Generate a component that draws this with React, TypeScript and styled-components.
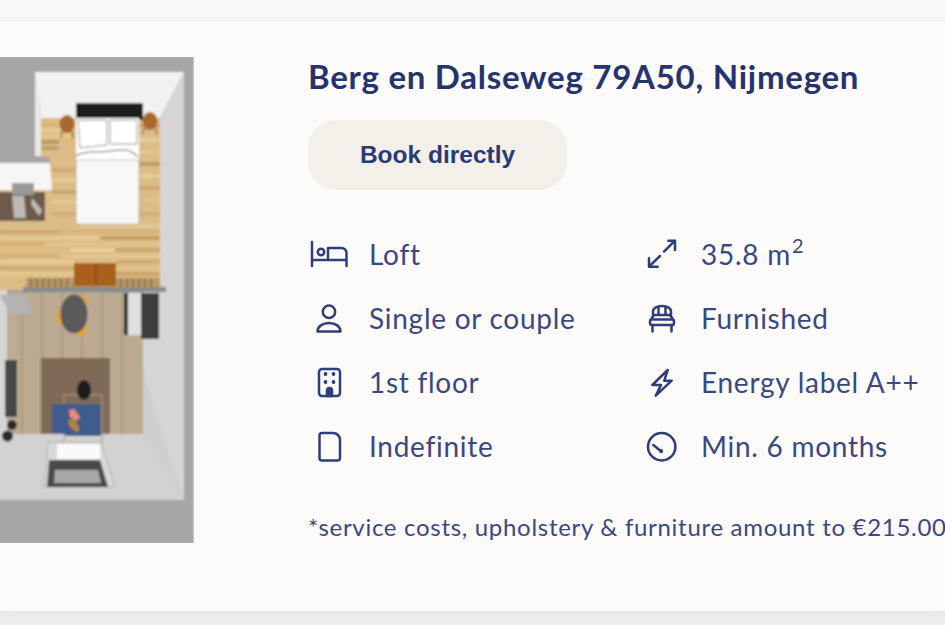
import React from "react";
import styled, { createGlobalStyle } from "styled-components";

const Global = createGlobalStyle`
  html, body { margin: 0; padding: 0; width: 945px; height: 625px; overflow: hidden; background: #fdfbf8; }
  #root { width: 945px; height: 625px; overflow: hidden; }
`;

const Page = styled.main`
  width: 945px;
  height: 625px;
  padding: 22px 0 14px;
  box-sizing: border-box;
  background: linear-gradient(#fdfbf8 0, #f5f5f5 22px, #eeeef0 100%);
  font-family: "Lato", "Liberation Sans", sans-serif;
  color: #2b3a75;
`;

const Card = styled.article`
  display: flex;
  height: 589px;
  padding-top: 35px;
  box-sizing: border-box;
  background: #fdfbf9;
  box-shadow: 0 2px 10px rgba(40, 50, 90, 0.06);
  overflow: hidden;
`;

const Plan = styled.svg`
  flex: 0 0 194px;
  width: 194px;
  height: 486px;
  display: block;
`;

const Details = styled.section`
  flex: 0 0 auto;
  margin-left: 114px;
  display: flex;
  flex-direction: column;
  align-items: flex-start;
`;

const Title = styled.h1`
  margin: -1px 0 0;
  font-size: 33px;
  letter-spacing: 0.74px;
  line-height: 40px;
  font-weight: 700;
  color: #25346f;
  white-space: nowrap;
`;

const BookButton = styled.button`
  margin-top: 24px;
  width: 259px;
  height: 70px;
  border: 0;
  border-radius: 28px;
  background: #f3efe9;
  color: #2b3a75;
  font-family: "Liberation Sans", Arial, sans-serif;
  font-size: 24.5px;
  font-weight: 700;
  padding: 0;
`;

const Facts = styled.ul`
  list-style: none;
  margin: 33px 0 0;
  padding: 0;
  display: grid;
  grid-template-columns: 332px 332px;
  grid-auto-rows: 64px;
`;

const Fact = styled.li`
  display: flex;
  align-items: center;
  gap: 19px;
  font-size: 28px;
  letter-spacing: 0.73px;
  white-space: nowrap;
  color: #3a4880;
`;

const FactLabel = styled.span`
  padding-bottom: 2px;
`;

const IconBox = styled.svg`
  flex: 0 0 42px;
  width: 42px;
  height: 42px;
  fill: none;
  stroke: #2f3e78;
  stroke-width: 2.5;
  stroke-linecap: round;
  stroke-linejoin: round;
`;

const Sup = styled.sup`
  font-size: 20px;
  line-height: 0;
  vertical-align: 12px;
  margin-left: 1px;
`;

const Note = styled.p`
  margin: 27px 0 0;
  font-size: 24px;
  letter-spacing: 0.7px;
  line-height: 42px;
  white-space: nowrap;
  color: #3a4880;
`;

const WindowDot = styled.circle`
  fill: #2f3e78;
  stroke: none;
`;

const icons: Record<string, React.ReactNode> = {
  bed: (
    <>
      <path d="M4 8V32M4 26H38.5M38.5 32V19.5a5 5 0 0 0-5-5.5H20V26" />
      <circle cx="13" cy="18" r="3.2" />
    </>
  ),
  person: (
    <>
      <circle cx="21" cy="13.7" r="6.2" />
      <path d="M9.5 33.5c0-5 5-8.5 11.5-8.5s11.5 3.500 11.500 8.500z" />
    </>
  ),
  building: (
    <>
      <rect x="11" y="7" width="21" height="27" rx="3" />
      <path d="M19 34V28.500a2.500 2.500 0 0 1 5 0V34z" fill="#2f3e78" />
      <WindowDot cx="17.500" cy="12" r="1.900" />
      <WindowDot cx="25.500" cy="12" r="1.900" />
      <WindowDot cx="17.500" cy="20" r="1.900" />
      <WindowDot cx="25.500" cy="20" r="1.900" />
    </>
  ),
  file: <path d="M14 7h11c4 0 7 3 7 7v18a2.500 2.500 0 0 1-2.500 2.500h-15.500a2.500 2.500 0 0 1-2.500-2.500v-22.500a2.500 2.500 0 0 1 2.500-2.500z" />,
  expand: <path d="M24 17.700L35 6.700M28.300 6.700H35V16M20 22L9 32.700M9 24.300V32.700H17.700" />,
  chair: (
    <>
      <path d="M13 17v-3.500c0-3 3.500-5.500 9-5.500s9 2.500 9 5.500V17zM18.500 9v8M25.500 9v8" />
      <path d="M14 17l-3 4.500M30 17l3 4.500" />
      <rect x="10" y="21.500" width="24" height="5.500" rx="2" />
      <path d="M12.500 27v6.500M31.500 27v6.500" />
    </>
  ),
  bolt: <path d="M27.700 8L12.300 23H21L15.700 33.700L31.700 18.700H24.300z" />,
  gauge: (
    <>
      <circle cx="21.700" cy="20.700" r="13.700" />
      <path d="M13.300 19L21.700 25.700" />
      <WindowDot cx="21" cy="25" r="2" />
    </>
  ),
};

const Icon = ({ name }: { name: string }) => (
  <IconBox viewBox="0 0 42 42" aria-hidden="true">
    {icons[name]}
  </IconBox>
);

const planks: [number, number, number, string][] = [
  [41, 122, 32, "#d9b67c"], [41, 128, 20, "#e6cb98"], [41, 134, 30, "#e3c48e"], [41, 140, 18, "#b99a68"], [41, 146, 18, "#bfa06c"],
  [52, 160, 24, "#e0c088"], [52, 168, 24, "#cfa96e"], [52, 178, 24, "#e6cb98"],
  [52, 190, 24, "#cba46a"], [52, 200, 24, "#e2c48d"], [52, 212, 24, "#d3ae75"],
  [0, 224, 80, "#dcbb84"], [80, 224, 80, "#e6ca96"], [0, 230, 60, "#cfaa70"],
  [60, 230, 100, "#d8b47a"], [0, 236, 100, "#e5c992"], [100, 236, 60, "#c99f64"], [0, 242, 45, "#d4ae74"],
  [45, 242, 115, "#e2c38c"], [0, 248, 70, "#ddbd84"], [70, 248, 45, "#e8cf9e"], [115, 248, 45, "#cda66b"],
  [0, 254, 60, "#d6b278"], [60, 254, 100, "#e4c690"], [0, 260, 74, "#e6cb98"], [116, 260, 44, "#d2ac72"],
  [0, 266, 74, "#cfa96e"], [116, 266, 44, "#e0c18a"], [0, 272, 74, "#e2c48d"], [116, 272, 44, "#c9a56c"],
  [139, 124, 21, "#c9a56c"], [139, 138, 21, "#e6cb98"], [139, 150, 21, "#e2c48e"], [139, 162, 21, "#bf9d66"],
  [139, 174, 21, "#e6cb98"], [139, 186, 21, "#cfa96f"], [139, 198, 21, "#e0c18a"], [139, 212, 21, "#d3ae75"],
];

const FloorPlan = () => (
  <Plan viewBox="0 57 194 486" role="img" aria-label="Floor plan">
    <defs>
      <filter id="soft"><feGaussianBlur stdDeviation="0.8" /></filter>
    </defs>
    <g filter="url(#soft)">
      <rect x="-4" y="53" width="198" height="494" fill="#a6a6a6" />
      {/* walls */}
      <polygon points="35,72 184,72 160,118 41,118" fill="#f2f2f2" />
      <polygon points="35,72 41,118 41,156 35,156" fill="#e9e9e9" />
      <polygon points="184,72 184,500 143,434 143,290 160,290 160,118" fill="#d5d5d5" />
      <polygon points="143,370 184,500 143,434" fill="#cfcfcf" />
      <polygon points="-4,434 143,434 184,500 -4,500" fill="#d2d2d2" />
      <rect x="-4" y="290" width="11" height="144" fill="#d5d5d5" />
      {/* upper wooden floor */}
      <polygon points="41,118 160,118 160,290 -4,290 -4,190 41,156" fill="#dcbc86" />
      {planks.map(([x, y, w, c], i) => (
        <rect key={i} x={x} y={y} width={w} height="4" fill={c} />
      ))}
      {/* inner wall */}
      <polygon points="-4,163 50,163 52,190 -4,190" fill="#f6f6f6" />
      <rect x="-4" y="157" width="54" height="6" fill="#a6a6a6" />
      {/* desk */}
      <rect x="-4" y="192" width="49" height="29" fill="#6e5a4e" />
      <path d="M12 196h12l2 22H14zM32 198l10 12-3 6-8-12z" fill="#bdbab4" />
      <path d="M12 183h22v12H12z" fill="#9a9a9a" />
      {/* bed */}
      <rect x="76" y="103" width="67" height="17" fill="#1c1c1c" />
      <rect x="76" y="118" width="63" height="50" fill="#fff" />
      <path d="M78 120h29v25l-27 3zM110 120h27v24h-27z" fill="#fff" stroke="#777" strokeWidth="0.800" />
      <path d="M75 156c12-6 24-3 36-5s20-2 27 6" stroke="#999" strokeWidth="1.500" fill="none" />
      <rect x="76" y="160" width="63" height="64" fill="#f8f8f8" stroke="#999" strokeWidth="0.600" />
      {/* nightstands */}
      <ellipse cx="67" cy="124" rx="7.500" ry="9" fill="#a8682f" />
      <path d="M62 131l-1 7M72 131l1 7" stroke="#6b4a2c" strokeWidth="1" />
      <ellipse cx="150" cy="121" rx="7.500" ry="9" fill="#a8682f" />
      <path d="M145 128l-3 6M155 128l2 6" stroke="#6b4a2c" strokeWidth="1" />
      {/* bench and radiator */}
      <rect x="26" y="278" width="134" height="13" fill="#b89868" />
      {[30, 36, 42, 48, 54, 60, 66, 120, 126, 132, 138, 144, 150].map((x) => (
        <rect key={x} x={x} y="278" width="2" height="11" fill="#8f7549" />
      ))}
      <rect x="74" y="263" width="42" height="23" fill="#a9601f" />
      <rect x="95" y="263" width="1.500" height="23" fill="#7d4716" />
      {/* lower floor */}
      <rect x="7" y="293" width="136" height="141" fill="#bcaa92" />
      {[20, 40, 60, 80, 100, 120].map((x) => (
        <rect key={x} x={x} y="293" width="4" height="141" fill="#b3a089" />
      ))}
      <rect x="23" y="287" width="143" height="5" fill="#8b8b88" />
      {/* sink unit */}
      <polygon points="0,295 27,295 32,314 10,314" fill="#b3b3b3" />
      {/* table with chairs */}
      <path d="M80 295c4 1 8 5 9 9l-4 1-7-7z" fill="#e0a52f" />
      <path d="M58 310c-2 5-2 10 1 15l3-1-1-14z" fill="#e0a52f" />
      <path d="M75 333c4 5 8 5 11-1l1-7-5 1z" fill="#e0a52f" />
      <ellipse cx="74" cy="314" rx="13.500" ry="19.500" fill="#5a5a5a" />
      {/* kitchen */}
      <rect x="124" y="293" width="17" height="42" fill="#dfdfdf" />
      <rect x="124" y="293" width="4" height="42" fill="#2a2a2a" />
      <rect x="141" y="293" width="18" height="46" fill="#3d3d3d" />
      {/* rug and sofa */}
      <rect x="41" y="358" width="69" height="76" fill="#7f6b58" />
      <rect x="64" y="395" width="38" height="50" fill="none" stroke="#b59b7e" strokeWidth="1" />
      <rect x="52" y="404" width="14" height="30" fill="#3f5b8e" />
      <rect x="65" y="404" width="36" height="32" fill="#3f5b8e" />
      <ellipse cx="84" cy="390" rx="7" ry="10" fill="#1e1e1e" />
      <path d="M69 410l5-1 6 8-3 4-7-4z" fill="#ee8a78" />
      <path d="M68 420l6-1 5 8-1 6-8-6z" fill="#b08a34" />
      {/* tv stand and chair */}
      <rect x="5" y="360" width="12" height="57" fill="#464646" />
      <circle cx="12" cy="425" r="5" fill="#2b2b2b" />
      <circle cx="7.500" cy="436" r="5.500" fill="#2b2b2b" />
      {/* balcony table */}
      <polygon points="48,442 101,442 115,487 44,487" fill="#d8d8d8" stroke="#999" strokeWidth="0.600" />
      <rect x="57" y="444" width="43" height="15" fill="#fafafa" />
      <polygon points="49,460 100,460 108,487 47,487" fill="#4a4a4a" />
      <polygon points="55,470 98,470 101,483 54,483" fill="#a9a9a9" />
    </g>
  </Plan>
);

const App = () => (
  <Page>
    <Global />
    <Card>
      <FloorPlan />
      <Details>
        <Title>Berg en Dalseweg 79A50, Nijmegen</Title>
        <BookButton type="button">Book directly</BookButton>
        <Facts>
          <Fact><Icon name="bed" /><FactLabel>Loft</FactLabel></Fact>
          <Fact><Icon name="expand" /><FactLabel>35.8 m<Sup>2</Sup></FactLabel></Fact>
          <Fact><Icon name="person" /><FactLabel>Single or couple</FactLabel></Fact>
          <Fact><Icon name="chair" /><FactLabel>Furnished</FactLabel></Fact>
          <Fact><Icon name="building" /><FactLabel>1st floor</FactLabel></Fact>
          <Fact><Icon name="bolt" /><FactLabel>Energy label A++</FactLabel></Fact>
          <Fact><Icon name="file" /><FactLabel>Indefinite</FactLabel></Fact>
          <Fact><Icon name="gauge" /><FactLabel>Min. 6 months</FactLabel></Fact>
        </Facts>
        <Note>*service costs, upholstery &amp; furniture amount to €215.00</Note>
      </Details>
    </Card>
  </Page>
);

export default App;
